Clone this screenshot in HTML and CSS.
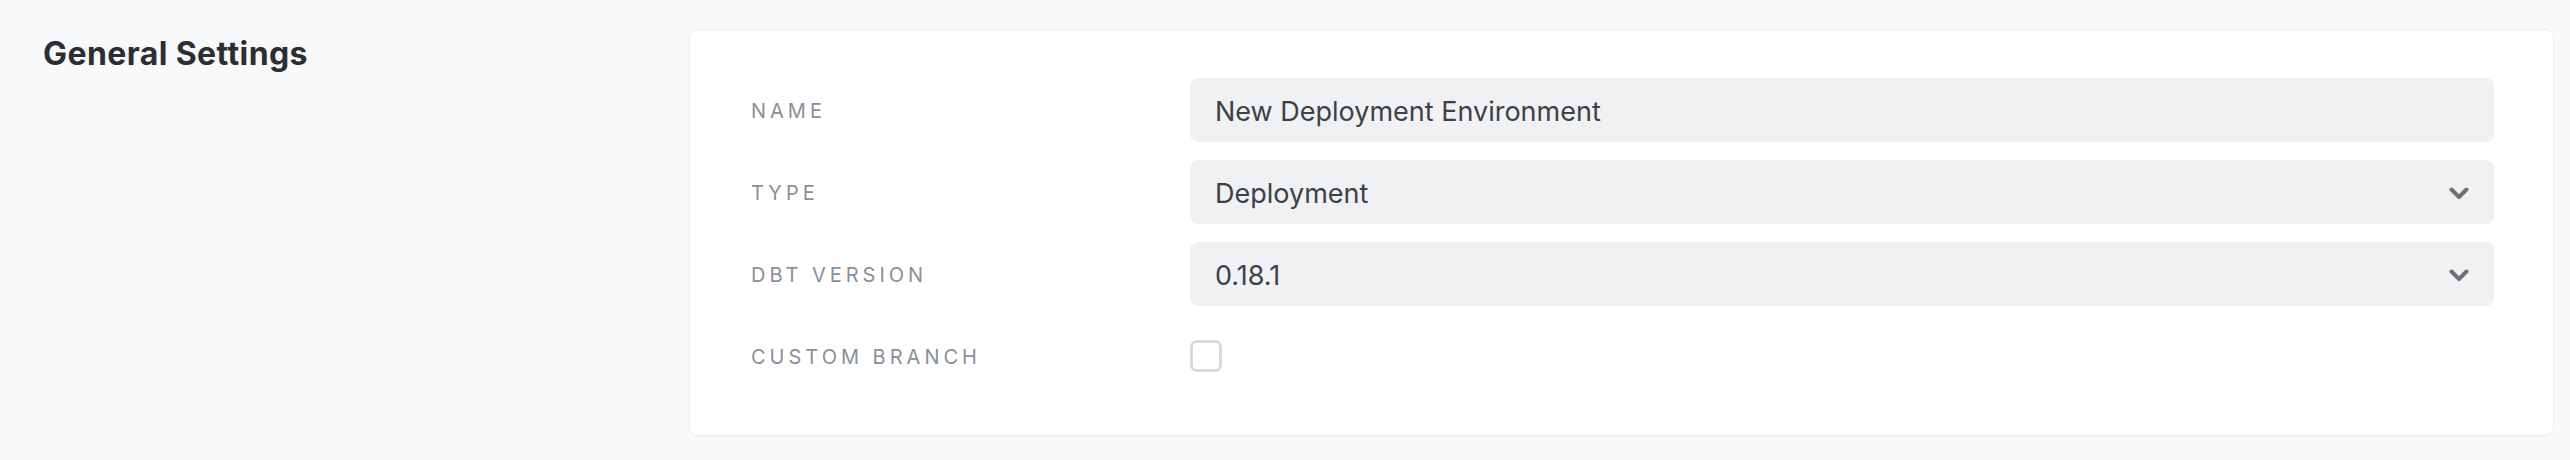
FILE: index.html
```html
<!DOCTYPE html>
<html lang="en">
<head>
<meta charset="utf-8">
<title>General Settings</title>
<link rel="stylesheet" href="styles.css">
</head>
<body>
<div class="page">
  <div class="side">
    <h2 class="title">General Settings</h2>
  </div>
  <div class="card">
    <div class="form">
      <div class="label">Name</div>
      <div class="field"><div class="input">New Deployment Environment</div></div>

      <div class="label">Type</div>
      <div class="field">
        <div class="input select">
          <span>Deployment</span>
          <svg class="chev" width="20" height="13" viewBox="0 0 20 13"><path d="M2.5 2.5 L10 10 L17.5 2.5" fill="none" stroke="#6f7073" stroke-width="4" stroke-linecap="round" stroke-linejoin="round"/></svg>
        </div>
      </div>

      <div class="label">dbt Version</div>
      <div class="field">
        <div class="input select">
          <span>0.18.1</span>
          <svg class="chev" width="20" height="13" viewBox="0 0 20 13"><path d="M2.5 2.5 L10 10 L17.5 2.5" fill="none" stroke="#6f7073" stroke-width="4" stroke-linecap="round" stroke-linejoin="round"/></svg>
        </div>
      </div>

      <div class="label">Custom Branch</div>
      <div class="field"><div class="checkbox"></div></div>
    </div>
  </div>
</div>
</body>
</html>
```

FILE: styles.css
```css
* { box-sizing: border-box; }
html, body {
  margin: 0;
  padding: 0;
  background: #f8f9fa;
  font-family: Inter, "Noto Sans", "Liberation Sans", sans-serif;
}
.page {
  display: flex;
  align-items: flex-start;
  padding: 29px 16px 24px 0;
  height: 460px;
}
.side {
  width: 689px;
  flex: none;
  padding-left: 43px;
}
.title {
  margin: 7px 0 0 0;
  font-size: 32px;
  line-height: 36px;
  font-weight: 700;
  letter-spacing: 0.4px;
  color: #2c2e33;
}
.card {
  flex: 1;
  height: 407px;
  background: #ffffff;
  border: 1px solid #eceef0;
  border-radius: 9px;
  box-shadow: 0 1px 2px rgba(0,0,0,0.03);
  padding: 48px 59px 47px 61px;
}
.form {
  display: grid;
  grid-template-columns: 439px 1fr;
  grid-auto-rows: 64px;
  row-gap: 18px;
}
.label {
  display: flex;
  align-items: center;
  padding-top: 2px;
  text-transform: uppercase;
  font-size: 20px;
  letter-spacing: 4px;
  color: #89909a;
}
.field {
  display: flex;
  align-items: center;
}
.input {
  width: 100%;
  height: 64px;
  background: #f0f1f3;
  border-radius: 8px;
  padding: 2px 25px 0 25px;
  display: flex;
  align-items: center;
  font-size: 27px;
  color: #3d4147;
}
.select {
  justify-content: space-between;
}
.chev {
  display: block;
}
.checkbox {
  width: 32px;
  height: 32px;
  border: 3px solid #d9d9d9;
  border-radius: 7px;
  background: #fff;
}
```
